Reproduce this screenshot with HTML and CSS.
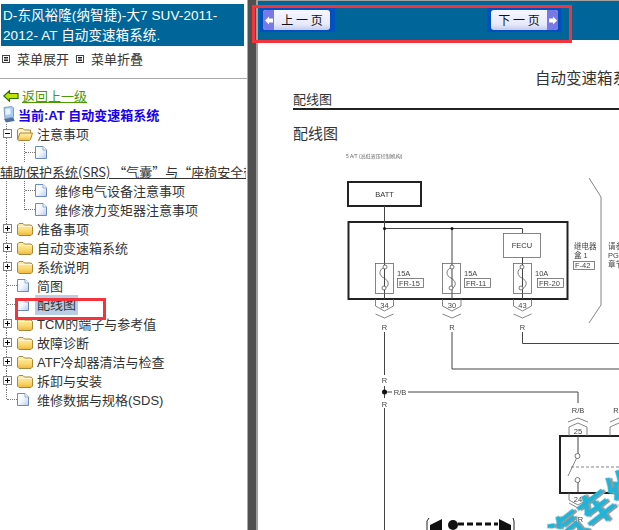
FILE: index.html
```html
<!DOCTYPE html>
<html lang="zh">
<head>
  <meta charset="UTF-8" />
  <title>AT 自动变速箱系统</title>
  <link rel="stylesheet" href="styles.css">
</head>
<body>
  <svg class="defs" width="0" height="0">
    <defs>
      <linearGradient id="page-fill" x1="0" y1="0" x2="1" y2="1">
        <stop offset="0" stop-color="#ffffff"/>
        <stop offset=".5" stop-color="#f2f6fd"/>
        <stop offset="1" stop-color="#b4cbee"/>
      </linearGradient>
      <linearGradient id="folder-fill" x1="0" y1="0" x2="0" y2="1">
        <stop offset="0" stop-color="#fff0b0"/>
        <stop offset=".6" stop-color="#fbd970"/>
        <stop offset="1" stop-color="#eeb63c"/>
      </linearGradient>
    </defs>
    <symbol id="page" viewBox="0 0 12 13">
      <path d="M.5 .5H8L11.500 4V12.500H.5Z" fill="url(#page-fill)" stroke="#6d8cbc"/>
      <path d="M8 .5V4H11.500" fill="#fff" stroke="#8ea8d0"/>
    </symbol>
    <symbol id="folder" viewBox="0 0 16 14">
      <path d="M.5 12V3L2 1.500H6L7.500 3H14L15.500 4.500V12L14 13.500H2Z" fill="url(#folder-fill)" stroke="#a8883c"/>
      <path d="M1.500 4.500H14.500" stroke="#fff6d0"/>
    </symbol>
    <symbol id="folder-open" viewBox="0 0 16 14">
      <path d="M.5 12V3L2 1.500H6L7.500 3H13.500V6" fill="#fff4c8" stroke="#a8883c"/>
      <path d="M.5 12.500L3 6H15.500L13.500 12.500L12.500 13.500H2Z" fill="url(#folder-fill)" stroke="#a8883c"/>
    </symbol>
    <symbol id="plus" viewBox="0 0 9 9">
      <rect x=".5" y=".5" width="8" height="8" fill="#fff" stroke="#808080"/>
      <path d="M2 4.500H7M4.500 2V7" stroke="#000"/>
    </symbol>
    <symbol id="minus" viewBox="0 0 9 9">
      <rect x=".5" y=".5" width="8" height="8" fill="#fff" stroke="#808080"/>
      <path d="M2 4.500H7" stroke="#000"/>
    </symbol>
    <symbol id="menu-box" viewBox="0 0 8 8">
      <rect x=".5" y=".5" width="7" height="7" fill="#fff" stroke="#444"/>
      <path d="M2 2.500H6M2 4H6M2 5.500H6" stroke="#222"/>
    </symbol>
  </svg>

  <div class="app">
    <aside class="sidebar">
      <div class="book-title">D-东风裕隆(纳智捷)-大7 SUV-2011-2012- AT 自动变速箱系统.</div>
      <div class="menu-tools">
        <svg class="menu-box"><use href="#menu-box"/></svg><span>菜单展开</span>
        <svg class="menu-box"><use href="#menu-box"/></svg><span>菜单折叠</span>
      </div>
      <hr class="rule">
      <a class="back-link">
        <svg width="16" height="12" viewBox="0 0 16 12"><path d="M.8 6L6.500 .8V3.500H15V8.500H6.500V11.200Z" fill="#bfe300" stroke="#2a7000" stroke-width="1.200"/></svg>
        <span>返回上一级</span>
      </a>
      <div class="current">
        <svg width="13" height="17" viewBox="0 0 13 17"><path d="M2 1.500L10 .5L11.500 2V11L3 12.500Z" fill="#a9cdf2" stroke="#7f9fc8"/><path d="M3.500 3L8.500 2.500V8L3.500 9Z" fill="#e8f4ff"/><path d="M2 13L11.500 11.500L12.500 15L4 16.500Z" fill="#4f6f9c"/></svg>
        <span>当前:AT 自动变速箱系统</span>
      </div>

      <div class="tree">
        <div class="row trunk">
          <svg class="toggle"><use href="#minus"/></svg>
          <svg class="folder"><use href="#folder-open"/></svg>
          <span>注意事项</span>
        </div>
        <div class="row trunk child">
          <i class="branch"></i>
          <svg class="page"><use href="#page"/></svg>
        </div>
        <div class="row wide"><span>辅助保护系统(SRS) “气囊”与“座椅安全带”预张紧器</span></div>
        <div class="row trunk child">
          <i class="branch"></i>
          <svg class="page"><use href="#page"/></svg>
          <span class="child-label">维修电气设备注意事项</span>
        </div>
        <div class="row trunk child last-child">
          <i class="branch"></i>
          <svg class="page"><use href="#page"/></svg>
          <span class="child-label">维修液力变矩器注意事项</span>
        </div>
        <div class="row trunk">
          <svg class="toggle"><use href="#plus"/></svg>
          <svg class="folder"><use href="#folder"/></svg>
          <span>准备事项</span>
        </div>
        <div class="row trunk">
          <svg class="toggle"><use href="#plus"/></svg>
          <svg class="folder"><use href="#folder"/></svg>
          <span>自动变速箱系统</span>
        </div>
        <div class="row trunk">
          <svg class="toggle"><use href="#plus"/></svg>
          <svg class="folder"><use href="#folder"/></svg>
          <span>系统说明</span>
        </div>
        <div class="row trunk leaf">
          <i class="branch"></i>
          <svg class="page"><use href="#page"/></svg>
          <span>简图</span>
        </div>
        <div class="row trunk leaf">
          <i class="branch"></i>
          <svg class="page"><use href="#page"/></svg>
          <span class="selected">配线图</span>
          <i class="mark mark-tree"></i>
        </div>
        <div class="row trunk">
          <svg class="toggle"><use href="#plus"/></svg>
          <svg class="folder"><use href="#folder"/></svg>
          <span>TCM的端子与参考值</span>
        </div>
        <div class="row trunk">
          <svg class="toggle"><use href="#plus"/></svg>
          <svg class="folder"><use href="#folder"/></svg>
          <span>故障诊断</span>
        </div>
        <div class="row trunk">
          <svg class="toggle"><use href="#plus"/></svg>
          <svg class="folder"><use href="#folder"/></svg>
          <span>ATF冷却器清洁与检查</span>
        </div>
        <div class="row trunk">
          <svg class="toggle"><use href="#plus"/></svg>
          <svg class="folder"><use href="#folder"/></svg>
          <span>拆卸与安装</span>
        </div>
        <div class="row trunk leaf end">
          <i class="branch"></i>
          <svg class="page"><use href="#page"/></svg>
          <span>维修数据与规格(SDS)</span>
        </div>
      </div>
    </aside>

    <div class="splitter"></div>

    <main class="content">
      <div class="nav-bar">
        <a class="page-btn prev">
          <span class="btn-face">
            <b class="arrow"><svg width="8" height="9" viewBox="0 0 8 9"><path d="M0 4.500L4 .5V2.500H8V6.500H4V8.500Z" fill="#fff"/></svg></b>
            <span class="btn-text">上 一 页</span>
          </span>
        </a>
        <a class="page-btn next">
          <span class="btn-face">
            <span class="btn-text">下 一 页</span>
            <b class="arrow"><svg width="8" height="9" viewBox="0 0 8 9"><path d="M8 4.500L4 .5V2.500H0V6.500H4V8.500Z" fill="#fff"/></svg></b>
          </span>
        </a>
      </div>
      <div class="doc">
        <div class="doc-title">自动变速箱系统</div>
        <div class="doc-section">配线图</div>
        <div class="doc-heading">配线图</div>
        <svg class="diagram" width="361" height="381" viewBox="258 149 361 381">
          <text class="tiny" x="346" y="158">5 A/T (高低液压控制机构)</text>

          <g class="heavy">
            <rect x="348" y="182" width="73" height="24"/>
            <rect x="348.500" y="222" width="219" height="77"/>
            <rect x="560" y="436" width="70" height="57"/>
          </g>
          <text class="label" x="384.500" y="197" text-anchor="middle">BATT</text>

          <g class="wire">
            <path d="M384.500 206V299M384.500 332V375M384.500 386V398M384.500 408V530"/>
            <path d="M384.500 228.500H522.500V233"/>
            <path d="M452 228.500V299M522.500 257V299"/>
            <path d="M452 332V369H619M522.500 332V343.500H619"/>
            <path d="M384.500 392H392M408 392H578V403M578 436V454M578 482V492M578 526V530"/>
            <circle cx="384.500" cy="228.500" r="1.500" class="dot"/>
            <circle cx="452" cy="228.500" r="1.500" class="dot"/>
            <circle cx="384.500" cy="392" r="2.500" class="dot"/>
          </g>

          <g class="thin">
            <rect x="503.500" y="233.500" width="37" height="24"/>
            <rect x="375.500" y="263.500" width="18" height="30"/>
            <rect x="442.500" y="263.500" width="18" height="30"/>
            <rect x="513.500" y="263.500" width="18" height="30"/>
            <rect x="397.500" y="278.500" width="26" height="9"/>
            <rect x="464.500" y="278.500" width="26" height="9"/>
            <rect x="537.500" y="278.500" width="26" height="9"/>
            <rect x="573.500" y="261.500" width="21" height="8"/>
          </g>
          <g class="fuse">
            <path d="M384.500 267C378 270 379 276 384 278C389 281 390 285 384.500 289"/>
            <path d="M452 267C445 270 446 276 451 278C456 281 457 285 452 289"/>
            <path d="M522.500 267C516 270 517 276 522 278C527 281 528 285 522.500 289"/>
            <circle cx="385" cy="267" r="2"/><circle cx="384" cy="288" r="2"/>
            <circle cx="452" cy="267" r="2"/><circle cx="451" cy="288" r="2"/>
            <circle cx="522" cy="267" r="2"/><circle cx="521" cy="288" r="2"/>
          </g>
          <text class="label" x="522" y="248" text-anchor="middle">FECU</text>
          <text class="small" x="397" y="276">15A</text>
          <text class="small" x="399" y="286">FR-15</text>
          <text class="small" x="464" y="276">15A</text>
          <text class="small" x="466" y="286">FR-11</text>
          <text class="small" x="535" y="276">10A</text>
          <text class="small" x="539" y="286">FR-20</text>
          <text class="small" x="574" y="249">继电器</text>
          <text class="small" x="574" y="258">盒 1</text>
          <text class="small" x="575" y="268">F-42</text>
          <text class="small" x="608" y="249">请参</text>
          <text class="small" x="608" y="258">PG</text>
          <text class="small" x="608" y="267">章节</text>
          <path class="thin" d="M589 178L601 197V305L589 323"/>

          <g class="thin">
            <path d="M375.500 299V306L384.500 311L393.500 306V299"/>
            <path d="M442.500 299V306L452 311L461 306V299"/>
            <path d="M513.500 299V306L522.500 311L531.500 306V299"/>
            <path d="M375.500 314L384.500 318L393.500 314M442.500 314L452 318L461 314M513.500 314L522.500 318L531.500 314"/>
            <path d="M569 436V427L578 423L587 427V436M568 422L578 418L588 422"/>
            <path d="M610 436V427L619 423M610 422L619 418"/>
            <path d="M569 493V500L578 505L587 500V493M569 503L578 508L587 503"/>
            <path d="M578 455L568 476"/>
            <path d="M571 467H619" stroke-dasharray="3 2"/>
          </g>
          <g class="fuse">
            <circle cx="577.500" cy="456" r="2.500"/>
            <circle cx="577.500" cy="480" r="2.500"/>
          </g>
          <g class="small-c">
            <text x="384.500" y="308">34</text>
            <text x="452" y="308">30</text>
            <text x="522.500" y="308">43</text>
            <text x="384.500" y="330">R</text>
            <text x="452" y="330">R</text>
            <text x="522.500" y="330">R</text>
            <text x="384.500" y="383">R</text>
            <text x="384.500" y="407">R</text>
            <text x="400" y="395">R/B</text>
            <text x="578" y="413">R/B</text>
            <text x="616" y="413">R</text>
            <text x="578" y="434">25</text>
            <text x="578" y="502">24</text>
            <text x="578" y="522">BR</text>
          </g>

          <g class="dim">
            <path d="M427 530V521L429 518M513 518L514 521V530" fill="none" stroke="#222"/>
            <path d="M430 525L442 519V530H430ZM511 525L499 519V530H511Z"/>
            <circle cx="453" cy="525" r="5"/>
            <path d="M458 524H498" stroke="#111" stroke-width="3" stroke-dasharray="6 3"/>
          </g>

          <text class="stamp" x="0" y="0" transform="translate(562 552) rotate(-38)">汽车维修</text>
        </svg>
      </div>
    </main>

    <i class="mark mark-nav"></i>
  </div>
</body>
</html>
```

FILE: styles.css
```css
html, body {
  margin: 0;
  height: 100%;
}
body {
  font-family: "Liberation Sans", "Noto Sans CJK SC", sans-serif;
  font-size: 13px;
  color: #333;
  background: #fff;
  overflow: hidden;
}
.defs { position: absolute; }
.app {
  position: relative;
  display: flex;
  height: 530px;
}

/* left menu */
.sidebar {
  width: 247px;
  flex: none;
  overflow: hidden;
  padding-top: 4px;
  box-sizing: border-box;
}
.book-title {
  box-sizing: border-box;
  margin: 0 3px 0 1px;
  padding: 2px 2px 0;
  height: 42px;
  background: #006699;
  color: #fff;
  font-size: 13.500px;
  line-height: 20px;
  letter-spacing: .1px;
}
.menu-tools {
  display: flex;
  align-items: center;
  height: 19px;
  margin-top: 3px;
  padding-left: 2px;
}
.menu-box {
  width: 8px;
  height: 8px;
  margin-right: 7px;
}
.menu-tools span { margin-right: 7px; }
.rule {
  height: 1px;
  margin: 10px 0 0;
  border: 0;
  background: #a8a8a8;
}
.back-link {
  display: flex;
  align-items: center;
  height: 19px;
  margin-top: 7px;
  padding-left: 3px;
  color: #4a9a00;
}
.back-link span {
  margin-left: 3px;
  text-decoration: underline;
}
.current {
  display: flex;
  align-items: center;
  height: 19px;
  padding-left: 2px;
  color: #1a00f0;
  font-weight: bold;
}
.current span { margin-left: 3px; }

/* tree */
.row {
  position: relative;
  display: flex;
  align-items: center;
  height: 19px;
  white-space: nowrap;
}
.trunk { background: repeating-linear-gradient(#777 0 1px, transparent 1px 2px) 6px 0 / 1px 100% no-repeat; }
.row.end { background-size: 1px 50%; }
.toggle {
  width: 9px;
  height: 9px;
  margin-left: 3px;
}
.folder {
  width: 16px;
  height: 14px;
  margin-left: 5px;
  margin-right: 4px;
}
.page {
  width: 12px;
  height: 13px;
}
.branch {
  display: block;
  width: 10px;
  height: 1px;
  margin-left: 7px;
  border-top: 1px dotted #777;
}
.leaf .page { margin-right: 8px; }
.child .branch {
  margin-left: 25px;
}
.child::before {
  content: "";
  position: absolute;
  left: 24px;
  top: 0;
  height: 100%;
  border-left: 1px dotted #777;
}
.last-child::before { height: 50%; }
.child-label { margin-left: 8px; }
.wide {
  overflow: hidden;
  width: 246px;
  font-family: "Noto Sans CJK SC", sans-serif;
}
.wide span { text-decoration: underline; }
.selected {
  margin-left: -2px;
  padding: 0 2px;
  background: #b9cde5;
  line-height: 20px;
}

/* red marks on the screenshot */
.mark {
  position: absolute;
  box-sizing: border-box;
  border: 3px solid #f5333c;
  z-index: 3;
}
.mark-tree {
  left: 15px;
  top: 3px;
  width: 91px;
  height: 22px;
}
.mark-nav {
  left: 252px;
  top: 5px;
  width: 320px;
  height: 38px;
}

.splitter {
  width: 8px;
  flex: none;
  background: #505050;
  border-left: 1px solid #a8a8a8;
  border-right: 2px solid #a0a0a0;
}

/* right page */
.content {
  position: relative;
  flex: 1;
  min-width: 0;
  overflow: hidden;
}
.nav-bar {
  position: relative;
  box-sizing: border-box;
  height: 41px;
  background: #006699;
  border-top: 1px solid #a0a0a0;
  border-bottom: 1px solid #fff;
}
.page-btn {
  position: absolute;
  top: 7px;
  box-sizing: border-box;
  display: flex;
  height: 24px;
  background: #0050c0;
}
.prev {
  left: 2px;
  width: 75px;
  padding: 2px 5px 2px 3px;
}
.next {
  left: 229px;
  width: 74px;
  padding: 2px 3px 2px 4px;
}
.btn-face {
  flex: 1;
  display: flex;
  overflow: hidden;
  border-radius: 3px;
  background: linear-gradient(#f6f6ff, #e8eafc 70%, #c6cbee);
  color: #111;
  font-family: "Noto Sans CJK SC", sans-serif;
  font-size: 12px;
  line-height: 20px;
}
.btn-text {
  flex: 1;
  text-align: center;
}
.arrow {
  display: flex;
  align-items: center;
  justify-content: center;
  width: 11px;
  background: #7878e6;
}
.doc {
  position: relative;
  height: 489px;
  background: #fff;
  overflow: hidden;
}
.doc-title {
  position: absolute;
  left: 277px;
  top: 25px;
  font-size: 15.500px;
  white-space: nowrap;
}
.doc-section {
  margin: 51px 0 0 35px;
  border-bottom: 2px solid #222;
  line-height: 16px;
}
.doc-heading {
  margin: 14px 0 0 35px;
  font-size: 15px;
  line-height: 20px;
}
.diagram {
  position: absolute;
  left: 0;
  top: 108px;
  filter: blur(.3px);
}

/* diagram */
.diagram text { font-family: "Liberation Sans", "Noto Sans CJK SC", sans-serif; fill: #333; }
.diagram .tiny { font-size: 5px; fill: #666; }
.diagram .label { font-size: 7.500px; }
.diagram .small { font-size: 7.500px; fill: #444; }
.small-c text { font-size: 7.500px; fill: #444; text-anchor: middle; }
.heavy rect { fill: none; stroke: #222; stroke-width: 2; }
.wire { fill: none; stroke: #444; stroke-width: 1; }
.dot { fill: #111; stroke: none; }
.thin, .thin rect, .thin path { fill: none; stroke: #666; stroke-width: .8; }
.fuse path, .fuse circle { fill: #fff; stroke: #444; stroke-width: .7; }
.fuse path { fill: none; }
.dim { fill: #111; }
.diagram .stamp {
  font-size: 36px;
  font-weight: bold;
  fill: #1fb4d8;
  filter: drop-shadow(2px 2px 0 #999);
}
```
